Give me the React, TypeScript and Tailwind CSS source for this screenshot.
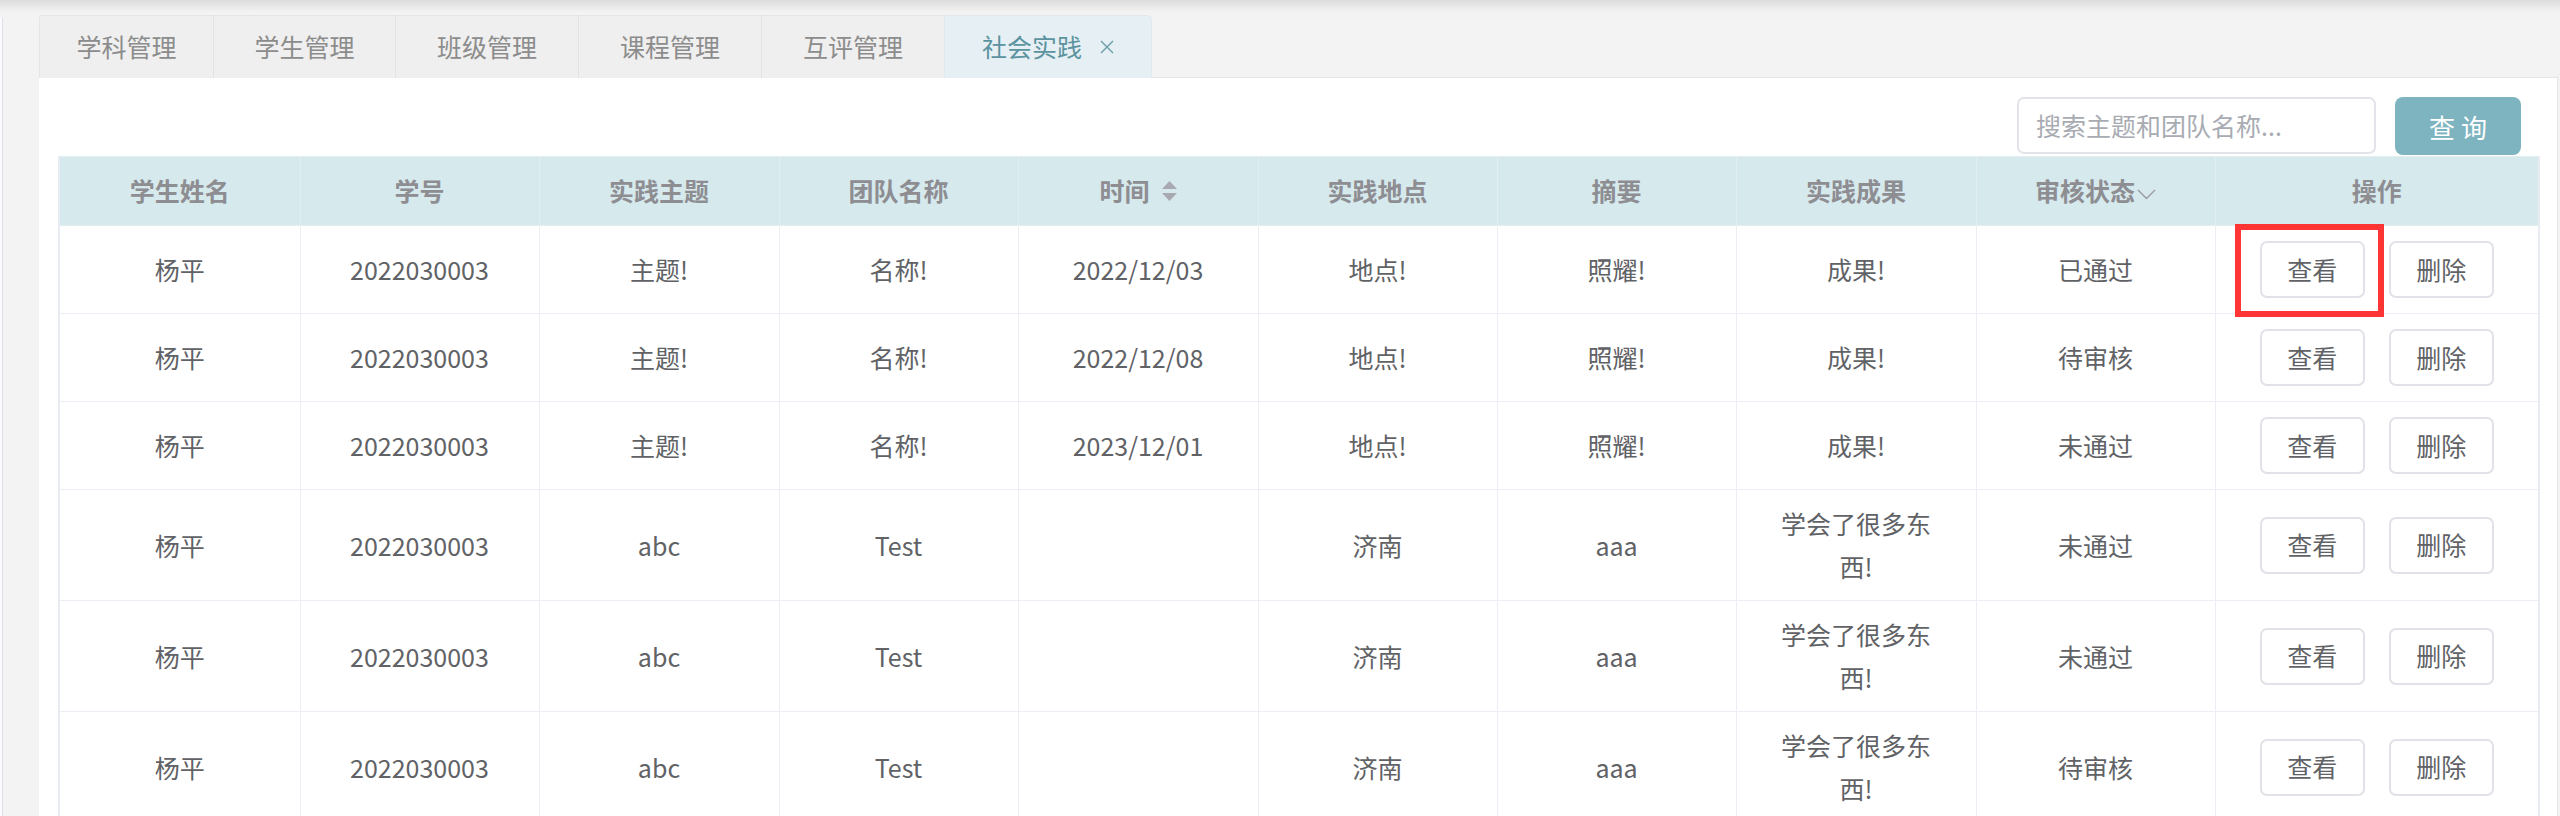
import React from "react";

const tabs = [
  { name: "学科管理", w: "w-[174px]" },
  { name: "学生管理", w: "w-[182px]" },
  { name: "班级管理", w: "w-[183px]" },
  { name: "课程管理", w: "w-[183px]" },
  { name: "互评管理", w: "w-[183px]" },
];

const headers = ["学生姓名", "学号", "实践主题", "团队名称", "时间", "实践地点", "摘要", "实践成果", "审核状态", "操作"];
const colWidths = [241, 239, 240, 239, 240, 239, 239, 240, 239, 324];

const rows = [
  ["杨平", "2022030003", "主题!", "名称!", "2022/12/03", "地点!", "照耀!", "成果!", "已通过"],
  ["杨平", "2022030003", "主题!", "名称!", "2022/12/08", "地点!", "照耀!", "成果!", "待审核"],
  ["杨平", "2022030003", "主题!", "名称!", "2023/12/01", "地点!", "照耀!", "成果!", "未通过"],
  ["杨平", "2022030003", "abc", "Test", "", "济南", "aaa", "学会了很多东西!", "未通过"],
  ["杨平", "2022030003", "abc", "Test", "", "济南", "aaa", "学会了很多东西!", "未通过"],
  ["杨平", "2022030003", "abc", "Test", "", "济南", "aaa", "学会了很多东西!", "待审核"],
];

const SortIcon = () => (
  <svg width="15" height="22" viewBox="0 0 15 22" className="ml-[12px] shrink-0">
    <polygon points="0,9 7.5,1 15,9" fill="#a9a9b1" />
    <polygon points="0,13 15,13 7.5,21" fill="#a9a9b1" />
  </svg>
);

const Chevron = () => (
  <svg width="19" height="11" viewBox="0 0 19 11" className="ml-[2px] mt-[6px] shrink-0">
    <polyline points="1,1 9.5,9.5 18,1" fill="none" stroke="#9a9aa0" strokeWidth="1.4" />
  </svg>
);

const App = () => {
  return (
    <div className="w-[2560px] h-[816px] overflow-hidden bg-[#f3f3f3] font-['Noto_Sans_CJK_SC','Microsoft_YaHei',sans-serif]">
      <div className="h-[12px] bg-gradient-to-b from-[#dcdcdc] to-[#f3f3f3]" />
      <div className="flex">
        <div className="w-[3px] mt-[5px] h-[820px] bg-[#fbfbfd] border-r border-[#dedfee] rounded-tr-[4px]" />
        <div className="ml-[36px] pt-[3px] w-[2519px]">
          {/* tabs */}
          <div className="flex h-[63px] relative z-10 -mb-px">
            {tabs.map((t, i) => (
              <div
                key={t.name}
                className={`${t.w} h-full flex items-center justify-center bg-[#efefef] border-t border-[#e5e5e5] ${i === 0 ? "border-l rounded-tl-[3px]" : "border-l border-l-[#e3e3e3]"} text-[25px] text-[#8c8c8c]`}
              >
                {t.name}
              </div>
            ))}
            <div className="w-[208px] h-full flex items-center justify-center bg-[#e6eff3] border-t border-l border-r border-[#e2e8ec] rounded-tr-[5px] text-[25px] text-[#5b939f]">
              社会实践
              <svg width="14" height="14" viewBox="0 0 14 14" className="ml-[18px]">
                <path d="M1 1 L13 13 M13 1 L1 13" stroke="#6a9ca7" strokeWidth="1.4" />
              </svg>
            </div>
          </div>

          {/* panel */}
          <div className="bg-white border-t border-r border-[#e4e4e4] pt-[19px] pl-[19px] pr-[20px] h-[760px]">
            <div className="flex justify-end items-start h-[59px] pr-[16px]">
              <div className="w-[359px] h-[57px] border-2 border-[#e2e4ea] rounded-[7px] flex items-center pl-[17px] text-[25px] text-[#a8abb2]">
                搜索主题和团队名称...
              </div>
              <button className="ml-[19px] w-[126px] h-[58px] rounded-[8px] bg-[#7db4bf] text-white text-[26px] tracking-[6px] pl-[6px]">
                查询
              </button>
            </div>

            <table className="table-fixed border-collapse w-[2480px] text-[25px] text-[#606266]">
              <colgroup>
                {colWidths.map((w, i) => (
                  <col key={i} style={{ width: w }} />
                ))}
              </colgroup>
              <thead>
                <tr className="h-[69px] bg-[#d6e9ed]">
                  {headers.map((h, i) => (
                    <th key={h} className={`border border-[#e3eef1] ${i === 0 ? "border-l-[#e8ebf1] border-l-2" : ""} ${i === 9 ? "border-r-2 border-r-[#e8ebf1]" : ""} font-bold text-[#8d8d92] p-0`}>
                      <div className="flex items-center justify-center">
                        {h}
                        {h === "时间" && <SortIcon />}
                        {h === "审核状态" && <Chevron />}
                      </div>
                    </th>
                  ))}
                </tr>
              </thead>
              <tbody>
                {rows.map((r, ri) => (
                  <tr key={ri}>
                    {r.map((c, ci) => (
                      <td
                        key={ci}
                        className={`border border-[#ebeef4] ${ci === 0 ? "border-l-2 border-l-[#e8ebf1]" : ""} px-[40px] py-[12px] text-center align-middle leading-[43px]`}
                      >
                        {c}
                      </td>
                    ))}
                    <td className="border border-[#ebeef4] border-r-2 border-r-[#e8ebf1] py-[12px] align-middle">
                      <div className="flex justify-center gap-[24px] my-[3px]">
                        <div className="relative">
                          <button className="w-[105px] h-[57px] border-2 border-[#e0e2e8] rounded-[7px] bg-white text-[25px] text-[#606266]">
                            查看
                          </button>
                          {ri === 0 && (
                            <div className="absolute -left-[25px] -right-[19px] -top-[17px] -bottom-[19px] border-[6px] border-[#ff3535] pointer-events-none" />
                          )}
                        </div>
                        <button className="w-[105px] h-[57px] border-2 border-[#e0e2e8] rounded-[7px] bg-white text-[25px] text-[#606266]">
                          删除
                        </button>
                      </div>
                    </td>
                  </tr>
                ))}
              </tbody>
            </table>
          </div>
        </div>
      </div>
    </div>
  );
};

export default App;
